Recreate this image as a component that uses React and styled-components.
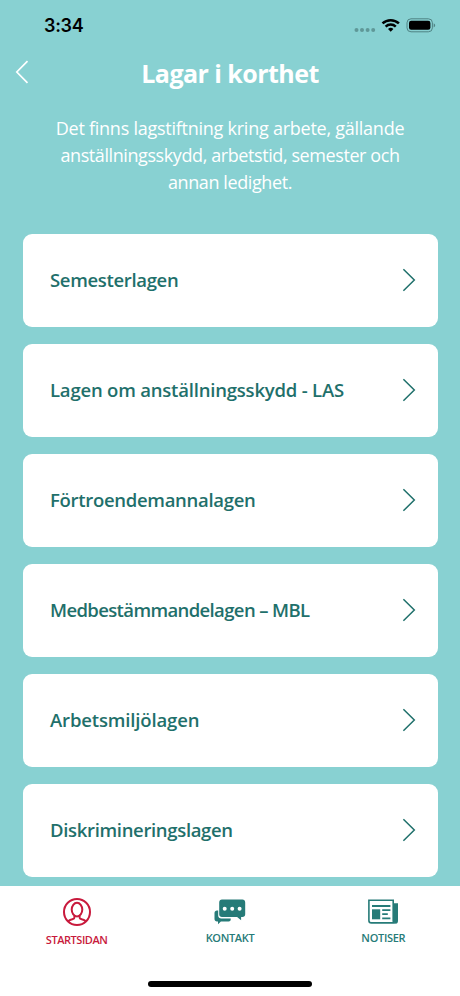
import React from "react";
import styled, { createGlobalStyle } from "styled-components";

const GlobalStyle = createGlobalStyle`
  :root {
    --teal: #88d1d2;
    --green: #1f706b;
    --nav: #267b78;
    --red: #c8193c;
  }
  * {
    box-sizing: border-box;
  }
  body {
    margin: 0;
    font-family: "Open Sans", "Noto Sans", sans-serif;
  }
`;

const Screen = styled.div`
  width: 460px;
  height: 996px;
  display: flex;
  flex-direction: column;
  overflow: hidden;
  background: var(--teal);
`;

const StatusBar = styled.div`
  height: 50px;
  flex: none;
  display: flex;
  justify-content: space-between;
  padding: 0 24px 0 44px;
`;

const Time = styled.span`
  margin-top: 14px;
  font: 600 18px/24px Inter, sans-serif;
  letter-spacing: -0.3px;
  color: #000;
`;

const StatusIcons = styled.svg`
  width: 84px;
  height: 20px;
  margin-top: 15px;
`;

const Header = styled.header`
  height: 48px;
  flex: none;
  display: grid;
  grid-template-columns: 44px 1fr 44px;
`;

const Back = styled.button`
  padding: 0;
  border: 0;
  background: none;
  svg {
    display: block;
    margin: -4px 0 0 15px;
  }
`;

const Title = styled.h1`
  margin: 5px 0 0;
  font-size: 25px;
  line-height: 36px;
  font-weight: 700;
  text-align: center;
  white-space: nowrap;
  color: #fff;
  letter-spacing: ${({ $track }) => $track}px;
`;

const Intro = styled.p`
  height: 135.7px;
  flex: none;
  margin: 0;
  padding-top: 17px;
  display: flex;
  flex-direction: column;
  align-items: center;
  font-size: 18px;
  line-height: 27px;
  color: #fff;
`;

const IntroLine = styled.span`
  white-space: nowrap;
  letter-spacing: ${({ $track }) => $track}px;
`;

const List = styled.ul`
  flex: 1;
  min-height: 0;
  margin: 0;
  padding: 0 22.5px;
  display: flex;
  flex-direction: column;
  gap: 16.7px;
  overflow: hidden;
  list-style: none;
`;

const Card = styled.li`
  height: 93.3px;
  flex: none;
  display: flex;
  align-items: center;
  justify-content: space-between;
  padding: 0 22px 1px 27.5px;
  border-radius: 9px;
  background: #fff;
`;

const CardLabel = styled.span`
  font-size: 18.5px;
  font-weight: 600;
  white-space: nowrap;
  color: var(--green);
  letter-spacing: ${({ $track }) => $track}px;
`;

const TabBar = styled.nav`
  height: 110px;
  flex: none;
  display: flex;
  flex-direction: column;
  justify-content: space-between;
  align-items: center;
  background: #fff;
`;

const Tabs = styled.div`
  width: 100%;
  display: grid;
  grid-template-columns: repeat(3, 1fr);
`;

const Tab = styled.div`
  display: flex;
  flex-direction: column;
  align-items: center;
  padding-top: ${({ $active }) => ($active ? 11 : 9)}px;
  color: ${({ $active }) => ($active ? "var(--red)" : "var(--nav)")};
  svg {
    display: block;
  }
`;

const TabLabel = styled.span`
  margin-top: 5px;
  font-size: 11px;
  line-height: 16px;
  font-weight: 600;
  white-space: nowrap;
  letter-spacing: ${({ $track }) => $track}px;
`;

const HomeIndicator = styled.div`
  width: 164px;
  height: 5.5px;
  margin-bottom: 9.5px;
  border-radius: 3px;
  background: #000;
`;

const Chevron = () => (
  <svg width="14" height="24" viewBox="0 0 14 24" fill="none">
    <path d="M1.4 1.2 12.3 12 1.4 22.8" stroke="#1f706b" strokeWidth="1.5" />
  </svg>
);

const PersonIcon = () => (
  <svg width="30" height="30" viewBox="0 0 30 30" fill="none" stroke="currentColor">
    <circle cx="15" cy="15" r="13" strokeWidth="2" />
    <ellipse cx="15" cy="12.6" rx="5.3" ry="6.8" strokeWidth="2" />
    <path
      d="M12.4 18.4v2.3c0 .8-1 1.2-2.2 1.6-1.7.5-3.1 1.1-4 2M17.6 18.4v2.3c0 .8 1 1.2 2.2 1.6 1.7.5 3.1 1.1 4 2"
      strokeWidth="2"
    />
  </svg>
);

const ChatIcon = () => (
  <svg width="32" height="30" viewBox="0 0 32 30" fill="currentColor">
    <path d="M3 15.5h1.2v5.1c0 1.9 1.3 3 3.1 3h9.4v1c0 1.2-.8 2-2 2H6.9L4 29.2v-2.6H3c-1.5 0-2.5-1-2.5-2.5V18c0-1.5 1-2.5 2.5-2.5Z" />
    <path
      fillRule="evenodd"
      d="M8 4.6h20.4c1.7 0 2.8 1.1 2.8 2.8v11.8c0 1.7-1.1 2.8-2.8 2.8h-1.3v3.3L23.1 22H8c-1.7 0-2.8-1.1-2.8-2.8V7.4c0-1.7 1.1-2.8 2.8-2.8Zm2.7 7.2a2 2 0 1 0 0 4 2 2 0 0 0 0-4Zm7.5 0a2 2 0 1 0 0 4 2 2 0 0 0 0-4Zm7.4 0a2 2 0 1 0 0 4 2 2 0 0 0 0-4Z"
    />
  </svg>
);

const NewsIcon = () => (
  <svg width="30" height="30" viewBox="0 0 30 30" fill="none" stroke="currentColor">
    <path
      d="M.9 5.3h24.3v20.5c0 1.4.6 2.1 1.6 2.1H3.4c-1.5 0-2.5-1-2.5-2.5Z"
      strokeWidth="1.6"
    />
    <path
      d="M26 8.2h4v17.9c0 1.6-.9 2.6-2.2 2.6s-1.8-.8-1.8-2Z"
      fill="currentColor"
      stroke="none"
    />
    <path d="M4 11h18.4M14.2 15.2h8.2M14.2 19.2h5.6M14.2 23.4h8.2" strokeWidth="1.8" />
    <path d="M4 14.3h8.2v10H4Z" fill="currentColor" stroke="none" />
  </svg>
);

const intro = [
  { text: "Det finns lagstiftning kring arbete, gällande", track: -0.25 },
  { text: "anställningsskydd, arbetstid, semester och", track: -0.41 },
  { text: "annan ledighet.", track: -0.4 },
];

const laws = [
  { name: "Semesterlagen", track: -0.33 },
  { name: "Lagen om anställningsskydd - LAS", track: -0.2 },
  { name: "Förtroendemannalagen", track: -0.3 },
  { name: "Medbestämmandelagen – MBL", track: -0.63 },
  { name: "Arbetsmiljölagen", track: -0.15 },
  { name: "Diskrimineringslagen", track: -0.33 },
];

const tabs = [
  { name: "STARTSIDAN", Icon: PersonIcon, active: true, track: -0.45 },
  { name: "KONTAKT", Icon: ChatIcon, track: -0.35 },
  { name: "NOTISER", Icon: NewsIcon, track: -0.3 },
];

const App = () => {
  return (
    <>
      <GlobalStyle />
      <Screen>
        <StatusBar>
          <Time>3:34</Time>
          <StatusIcons viewBox="0 0 84 20">
            <g fill="#5f9898">
              <circle cx="4.5" cy="15" r="2" />
              <circle cx="10" cy="15" r="2" />
              <circle cx="15.6" cy="15" r="2" />
              <circle cx="21.2" cy="15" r="2" />
            </g>
            <g fill="none" stroke="#000" strokeWidth="2.5">
              <path d="M30.5 8.4a12 12 0 0 1 16.4 0" />
              <path d="M33.6 11.6a7.5 7.5 0 0 1 10.2 0" />
            </g>
            <path d="M38.7 16.8 36 14.1a4 4 0 0 1 5.4 0Z" />
            <rect x="55" y="3.8" width="25.4" height="13" rx="4" fill="none" stroke="#4f8384" />
            <rect x="57" y="5.8" width="21.4" height="9" rx="2.2" />
            <path d="M81.7 8.2c2 .8 2 3.4 0 4.2Z" fill="#4f8384" />
          </StatusIcons>
        </StatusBar>
        <Header>
          <Back aria-label="Tillbaka">
            <svg width="14" height="24" viewBox="0 0 14 24" fill="none">
              <path d="M12.5 1.2 1.8 12l10.7 10.8" stroke="#fff" strokeWidth="1.7" />
            </svg>
          </Back>
          <Title $track={-0.55}>Lagar i korthet</Title>
        </Header>
        <Intro>
          {intro.map(({ text, track }) => (
            <IntroLine key={text} $track={track}>
              {text}
            </IntroLine>
          ))}
        </Intro>
        <List>
          {laws.map(({ name, track }) => (
            <Card key={name}>
              <CardLabel $track={track}>{name}</CardLabel>
              <Chevron />
            </Card>
          ))}
        </List>
        <TabBar>
          <Tabs>
            {tabs.map(({ name, Icon, active, track }) => (
              <Tab key={name} $active={active}>
                <Icon />
                <TabLabel $track={track}>{name}</TabLabel>
              </Tab>
            ))}
          </Tabs>
          <HomeIndicator />
        </TabBar>
      </Screen>
    </>
  );
};

export default App;
